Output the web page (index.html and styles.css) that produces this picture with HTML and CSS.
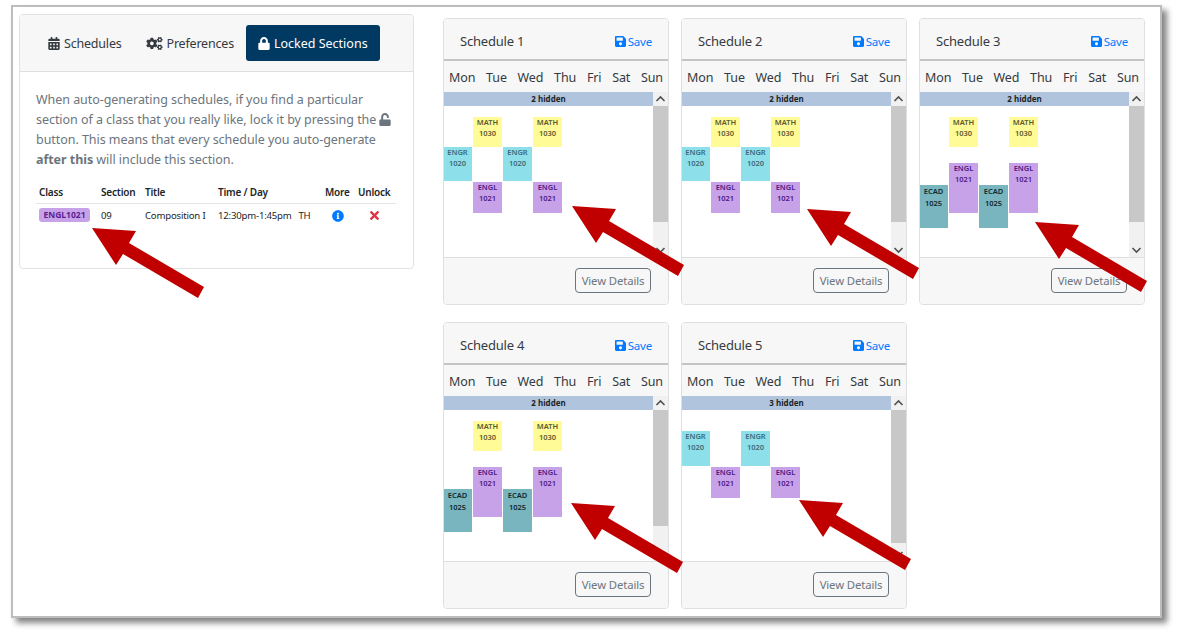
FILE: index.html
```html
<!DOCTYPE html>
<html lang="en">
<head>
<meta charset="utf-8">
<title>Locked Sections</title>
<link rel="stylesheet" href="styles.css">
</head>
<body>
<svg class="defs" aria-hidden="true">
  <symbol id="i-cal" viewBox="0 0 448 512"><path d="M0 464c0 26.5 21.5 48 48 48h352c26.5 0 48-21.5 48-48V192H0v272zm320-196c0-6.6 5.4-12 12-12h40c6.6 0 12 5.4 12 12v40c0 6.6-5.4 12-12 12h-40c-6.6 0-12-5.4-12-12v-40zm0 128c0-6.6 5.4-12 12-12h40c6.6 0 12 5.4 12 12v40c0 6.6-5.4 12-12 12h-40c-6.6 0-12-5.4-12-12v-40zM192 268c0-6.6 5.4-12 12-12h40c6.6 0 12 5.4 12 12v40c0 6.6-5.4 12-12 12h-40c-6.6 0-12-5.4-12-12v-40zm0 128c0-6.6 5.4-12 12-12h40c6.6 0 12 5.4 12 12v40c0 6.6-5.4 12-12 12h-40c-6.6 0-12-5.4-12-12v-40zM64 268c0-6.6 5.4-12 12-12h40c6.6 0 12 5.4 12 12v40c0 6.6-5.4 12-12 12H76c-6.6 0-12-5.4-12-12v-40zm0 128c0-6.6 5.4-12 12-12h40c6.6 0 12 5.4 12 12v40c0 6.6-5.4 12-12 12H76c-6.6 0-12-5.4-12-12v-40zM400 64h-48V16c0-8.8-7.2-16-16-16h-32c-8.8 0-16 7.2-16 16v48H160V16c0-8.8-7.2-16-16-16h-32c-8.8 0-16 7.2-16 16v48H48C21.5 64 0 85.5 0 112v48h448v-48c0-26.5-21.5-48-48-48z"/></symbol>
  <symbol id="i-cogs" viewBox="0 0 640 512"><path d="M512.1 191l-8.2 14.3c-3 5.3-9.4 7.5-15.1 5.4-11.8-4.4-22.6-10.7-32.1-18.6-4.6-3.8-5.8-10.5-2.8-15.7l8.2-14.3c-6.9-8-12.3-17.3-15.9-27.4h-16.5c-6 0-11.2-4.3-12.2-10.3-2-12-2.1-24.6 0-37.1 1-6 6.2-10.4 12.2-10.4h16.5c3.6-10.1 9-19.4 15.9-27.4l-8.2-14.3c-3-5.2-1.9-11.9 2.8-15.7 9.5-7.9 20.4-14.2 32.1-18.6 5.7-2.1 12.1.1 15.1 5.4l8.2 14.3c10.5-1.9 21.2-1.9 31.7 0L552 6.3c3-5.3 9.4-7.5 15.1-5.4 11.8 4.4 22.6 10.7 32.1 18.6 4.6 3.8 5.8 10.5 2.8 15.7l-8.2 14.3c6.9 8 12.3 17.3 15.9 27.4h16.5c6 0 11.2 4.3 12.2 10.3 2 12 2.1 24.6 0 37.1-1 6-6.2 10.4-12.2 10.4h-16.5c-3.6 10.1-9 19.4-15.9 27.4l8.2 14.3c3 5.2 1.9 11.9-2.8 15.7-9.5 7.9-20.4 14.2-32.1 18.6-5.7 2.1-12.1-.1-15.1-5.4l-8.2-14.3c-10.4 1.9-21.2 1.9-31.7 0zm-10.5-58.8c38.5 29.6 82.4-14.3 52.8-52.8-38.5-29.7-82.4 14.3-52.8 52.8zM386.3 286.1l33.7 16.8c10.1 5.8 14.5 18.1 10.5 29.1-8.9 24.2-26.4 46.4-42.6 65.8-7.4 8.9-20.2 11.1-30.3 5.3l-29.1-16.8c-16 13.7-34.6 24.6-54.9 31.7v33.6c0 11.6-8.3 21.6-19.7 23.6-24.6 4.2-50.4 4.4-75.9 0-11.5-2-20-11.9-20-23.6V418c-20.3-7.2-38.9-18-54.9-31.7L74 403c-10 5.8-22.9 3.6-30.3-5.3-16.2-19.4-33.3-41.6-42.2-65.7-4-10.9.4-23.2 10.5-29.1l33.3-16.8c-3.9-20.9-3.9-42.4 0-63.4L12 205.8c-10.1-5.8-14.6-18.1-10.5-29 8.9-24.2 26-46.4 42.2-65.8 7.4-8.9 20.2-11.1 30.3-5.3l29.1 16.8c16-13.7 34.6-24.6 54.9-31.7V57.1c0-11.5 8.2-21.5 19.6-23.5 24.6-4.2 50.5-4.4 76-.1 11.5 2 20 11.9 20 23.6v33.6c20.3 7.2 38.9 18 54.9 31.7l29.1-16.8c10-5.8 22.9-3.6 30.3 5.3 16.2 19.4 33.2 41.6 42.1 65.8 4 10.9.1 23.2-10 29.1l-33.7 16.8c3.9 21 3.9 42.5 0 63.5zm-117.6 21.1c59.2-77-28.7-164.9-105.7-105.7-59.2 77 28.7 164.9 105.7 105.7zm243.4 182.7l-8.2 14.3c-3 5.3-9.4 7.5-15.1 5.4-11.8-4.4-22.6-10.7-32.1-18.6-4.6-3.8-5.8-10.5-2.8-15.7l8.2-14.3c-6.9-8-12.3-17.3-15.9-27.4h-16.5c-6 0-11.2-4.3-12.2-10.3-2-12-2.1-24.6 0-37.1 1-6 6.2-10.4 12.2-10.4h16.5c3.6-10.1 9-19.4 15.9-27.4l-8.2-14.3c-3-5.2-1.9-11.9 2.8-15.7 9.5-7.9 20.4-14.2 32.1-18.6 5.7-2.1 12.1.1 15.1 5.4l8.2 14.3c10.5-1.9 21.2-1.9 31.7 0l8.2-14.3c3-5.3 9.4-7.5 15.1-5.4 11.8 4.4 22.6 10.7 32.1 18.6 4.6 3.8 5.8 10.5 2.8 15.7l-8.2 14.3c6.9 8 12.3 17.3 15.9 27.4h16.5c6 0 11.2 4.3 12.2 10.3 2 12 2.1 24.6 0 37.1-1 6-6.2 10.4-12.2 10.4h-16.5c-3.6 10.1-9 19.4-15.9 27.4l8.2 14.3c3 5.2 1.9 11.9-2.8 15.7-9.5 7.9-20.4 14.2-32.1 18.6-5.7 2.1-12.1-.1-15.1-5.4l-8.2-14.3c-10.4 1.9-21.2 1.9-31.7 0zM501.6 431c38.5 29.6 82.4-14.3 52.8-52.8-38.5-29.6-82.4 14.3-52.8 52.8z"/></symbol>
  <symbol id="i-lock" viewBox="0 0 448 512"><path d="M400 224h-24v-72C376 68.2 307.8 0 224 0S72 68.2 72 152v72H48c-26.5 0-48 21.5-48 48v192c0 26.5 21.5 48 48 48h352c26.5 0 48-21.5 48-48V272c0-26.5-21.5-48-48-48zm-104 0H152v-72c0-39.7 32.3-72 72-72s72 32.3 72 72v72z"/></symbol>
  <symbol id="i-unlock" viewBox="0 0 448 512"><path d="M400 256H152V152.9c0-39.6 31.7-72.5 71.3-72.9 40-.4 72.7 32.1 72.7 72v16c0 13.3 10.7 24 24 24h32c13.3 0 24-10.7 24-24v-16C376 68 307.5-.3 223.5 0 139.5.3 72 69.5 72 153.5V256H48c-26.5 0-48 21.5-48 48v160c0 26.5 21.5 48 48 48h352c26.5 0 48-21.5 48-48V304c0-26.5-21.5-48-48-48z"/></symbol>
  <symbol id="i-save" viewBox="0 0 448 512"><path d="M433.941 129.941l-83.882-83.882A48 48 0 0 0 316.118 32H48C21.49 32 0 53.49 0 80v352c0 26.51 21.49 48 48 48h352c26.51 0 48-21.49 48-48V163.882a48 48 0 0 0-14.059-33.941zM224 416c-35.346 0-64-28.654-64-64 0-35.346 28.654-64 64-64s64 28.654 64 64c0 35.346-28.654 64-64 64zm96-304.52V212c0 6.627-5.373 12-12 12H76c-6.627 0-12-5.373-12-12V108c0-6.627 5.373-12 12-12h228.52c3.183 0 6.235 1.264 8.485 3.515l3.48 3.48A11.996 11.996 0 0 1 320 111.48z"/></symbol>
  <symbol id="i-info" viewBox="0 0 512 512"><path d="M256 8C119.043 8 8 119.083 8 256c0 136.997 111.043 248 248 248s248-111.003 248-248C504 119.083 392.957 8 256 8zm0 110c23.196 0 42 18.804 42 42s-18.804 42-42 42-42-18.804-42-42 18.804-42 42-42zm56 254c0 6.627-5.373 12-12 12h-88c-6.627 0-12-5.373-12-12v-24c0-6.627 5.373-12 12-12h12v-64h-12c-6.627 0-12-5.373-12-12v-24c0-6.627 5.373-12 12-12h64c6.627 0 12 5.373 12 12v100h12c6.627 0 12 5.373 12 12v24z"/></symbol>
  <symbol id="i-times" viewBox="0 0 352 512"><path d="M242.72 256l100.07-100.07c12.28-12.28 12.28-32.19 0-44.48l-22.24-22.24c-12.28-12.28-32.19-12.28-44.48 0L176 189.28 75.93 89.21c-12.28-12.28-32.19-12.28-44.48 0L9.21 111.45c-12.28 12.28-12.28 32.19 0 44.48L109.28 256 9.21 356.07c-12.28 12.28-12.28 32.19 0 44.48l22.24 22.24c12.28 12.28 32.2 12.28 44.48 0L176 322.72l100.07 100.07c12.28 12.28 32.2 12.28 44.48 0l22.24-22.24c12.28-12.28 12.28-32.19 0-44.48L242.72 256z"/></symbol>
  <symbol id="i-up" viewBox="0 0 15 14"><path d="M3.5 9 7.5 5 11.5 9" fill="none" stroke="currentColor" stroke-width="1.6"/></symbol>
  <symbol id="i-down" viewBox="0 0 15 14"><path d="M3.5 5 7.5 9 11.5 5" fill="none" stroke="currentColor" stroke-width="1.6"/></symbol>
  <symbol id="i-arrow" viewBox="0 0 113 71"><polygon points="0,0 44,3 37,15 112,59 106,70 31,26 24,37"/></symbol>
</svg>

<main class="frame">
  <section class="panel">
    <nav class="panel-head">
      <a class="tab"><svg class="ic ic-cal"><use href="#i-cal"/></svg>Schedules</a>
      <a class="tab"><svg class="ic ic-cogs"><use href="#i-cogs"/></svg>Preferences</a>
      <a class="tab active"><svg class="ic ic-cal"><use href="#i-lock"/></svg>Locked Sections</a>
    </nav>
    <div class="panel-body">
      <p class="lead">When auto-generating schedules, if you find a particular section of a class that you really like, lock it by pressing the <svg class="ic-inline"><use href="#i-unlock"/></svg> button. This means that every schedule you auto-generate <b>after this</b> will include this section.</p>
      <table class="locks">
        <colgroup><col class="w-class"><col class="w-sec"><col class="w-title"><col class="w-time"><col class="w-more"><col class="w-unlock"></colgroup>
        <thead><tr><th>Class</th><th>Section</th><th>Title</th><th>Time / Day</th><th>More</th><th>Unlock</th></tr></thead>
        <tbody><tr>
          <td><span class="badge">ENGL1021</span></td><td>09</td><td>Composition I</td><td>12:30pm-1:45pm&nbsp;&nbsp;&nbsp;TH</td>
          <td class="mid"><svg class="ic-info"><use href="#i-info"/></svg></td>
          <td class="mid"><svg class="ic-times"><use href="#i-times"/></svg></td>
        </tr></tbody>
      </table>
    </div>
  </section>

  <section class="cards">
    <article class="card">
      <header class="card-head"><h2>Schedule 1</h2><a class="save"><svg class="ic-save"><use href="#i-save"/></svg>Save</a></header>
      <div class="days"><span>Mon</span><span>Tue</span><span>Wed</span><span>Thu</span><span>Fri</span><span>Sat</span><span>Sun</span></div>
      <div class="cal">
        <div class="view"><div class="hidden-bar">2 hidden</div>
          <div class="ev math c1 mw-a">MATH<br>1030</div><div class="ev math c3 mw-a">MATH<br>1030</div>
          <div class="ev engr c0 er-a">ENGR<br>1020</div><div class="ev engr c2 er-a">ENGR<br>1020</div>
          <div class="ev engl c1 el-a">ENGL<br>1021</div><div class="ev engl c3 el-a">ENGL<br>1021</div>
        </div>
        <div class="sb"><svg class="sb-btn"><use href="#i-up"/></svg><div class="thumb"></div><svg class="sb-btn"><use href="#i-down"/></svg></div>
      </div>
      <footer class="card-foot"><a class="btn">View Details</a></footer>
    </article>
    <article class="card">
      <header class="card-head"><h2>Schedule 2</h2><a class="save"><svg class="ic-save"><use href="#i-save"/></svg>Save</a></header>
      <div class="days"><span>Mon</span><span>Tue</span><span>Wed</span><span>Thu</span><span>Fri</span><span>Sat</span><span>Sun</span></div>
      <div class="cal">
        <div class="view"><div class="hidden-bar">2 hidden</div>
          <div class="ev math c1 mw-a">MATH<br>1030</div><div class="ev math c3 mw-a">MATH<br>1030</div>
          <div class="ev engr c0 er-a">ENGR<br>1020</div><div class="ev engr c2 er-a">ENGR<br>1020</div>
          <div class="ev engl c1 el-a">ENGL<br>1021</div><div class="ev engl c3 el-a">ENGL<br>1021</div>
        </div>
        <div class="sb"><svg class="sb-btn"><use href="#i-up"/></svg><div class="thumb"></div><svg class="sb-btn"><use href="#i-down"/></svg></div>
      </div>
      <footer class="card-foot"><a class="btn">View Details</a></footer>
    </article>
    <article class="card">
      <header class="card-head"><h2>Schedule 3</h2><a class="save"><svg class="ic-save"><use href="#i-save"/></svg>Save</a></header>
      <div class="days"><span>Mon</span><span>Tue</span><span>Wed</span><span>Thu</span><span>Fri</span><span>Sat</span><span>Sun</span></div>
      <div class="cal">
        <div class="view"><div class="hidden-bar">2 hidden</div>
          <div class="ev math c1 mw-a">MATH<br>1030</div><div class="ev math c3 mw-a">MATH<br>1030</div>
          <div class="ev engl c1 el-b">ENGL<br>1021</div><div class="ev engl c3 el-b">ENGL<br>1021</div>
          <div class="ev ecad c0">ECAD<br>1025</div><div class="ev ecad c2">ECAD<br>1025</div>
        </div>
        <div class="sb"><svg class="sb-btn"><use href="#i-up"/></svg><div class="thumb"></div><svg class="sb-btn"><use href="#i-down"/></svg></div>
      </div>
      <footer class="card-foot"><a class="btn">View Details</a></footer>
    </article>
    <article class="card">
      <header class="card-head"><h2>Schedule 4</h2><a class="save"><svg class="ic-save"><use href="#i-save"/></svg>Save</a></header>
      <div class="days"><span>Mon</span><span>Tue</span><span>Wed</span><span>Thu</span><span>Fri</span><span>Sat</span><span>Sun</span></div>
      <div class="cal">
        <div class="view"><div class="hidden-bar">2 hidden</div>
          <div class="ev math c1 mw-a">MATH<br>1030</div><div class="ev math c3 mw-a">MATH<br>1030</div>
          <div class="ev engl c1 el-b">ENGL<br>1021</div><div class="ev engl c3 el-b">ENGL<br>1021</div>
          <div class="ev ecad c0">ECAD<br>1025</div><div class="ev ecad c2">ECAD<br>1025</div>
        </div>
        <div class="sb"><svg class="sb-btn"><use href="#i-up"/></svg><div class="thumb"></div><svg class="sb-btn"><use href="#i-down"/></svg></div>
      </div>
      <footer class="card-foot"><a class="btn">View Details</a></footer>
    </article>
    <article class="card">
      <header class="card-head"><h2>Schedule 5</h2><a class="save"><svg class="ic-save"><use href="#i-save"/></svg>Save</a></header>
      <div class="days"><span>Mon</span><span>Tue</span><span>Wed</span><span>Thu</span><span>Fri</span><span>Sat</span><span>Sun</span></div>
      <div class="cal">
        <div class="view"><div class="hidden-bar">3 hidden</div>
          <div class="ev engr c0 er-b">ENGR<br>1020</div><div class="ev engr c2 er-b">ENGR<br>1020</div>
          <div class="ev engl c1 el-c">ENGL<br>1021</div><div class="ev engl c3 el-c">ENGL<br>1021</div>
        </div>
        <div class="sb"><svg class="sb-btn"><use href="#i-up"/></svg><div class="thumb long"></div><svg class="sb-btn"><use href="#i-down"/></svg></div>
      </div>
      <footer class="card-foot"><a class="btn">View Details</a></footer>
    </article>
  </section>

  <svg class="arrow a1"><use href="#i-arrow"/></svg>
  <svg class="arrow a2"><use href="#i-arrow"/></svg>
  <svg class="arrow a3"><use href="#i-arrow"/></svg>
  <svg class="arrow a4"><use href="#i-arrow"/></svg>
  <svg class="arrow a5"><use href="#i-arrow"/></svg>
  <svg class="arrow a6"><use href="#i-arrow"/></svg>
</main>
</body>
</html>
```
FILE: styles.css
```css
* { box-sizing: border-box; }
html, body { margin: 0; padding: 0; background: #fff; }
body { width: 1188px; height: 638px; overflow: hidden; font-family: "Noto Sans", "Open Sans", sans-serif; color: #212529; }
.defs { position: absolute; width: 0; height: 0; }

.frame {
  position: relative;
  display: flex;
  align-items: flex-start;
  width: 1151px;
  height: 613px;
  margin: 5px 0 0 11px;
  padding: 7px 0 0 6px;
  border: 2px solid #bdbdbd;
  box-shadow: 5px 5px 6px #858585;
  background: #fff;
}

.panel {
  flex: none;
  width: 395px;
  height: 255px;
  border: 1px solid #e2e2e2;
  border-radius: 4px;
  overflow: hidden;
}
.panel-head {
  display: flex;
  height: 57px;
  padding: 10px 0 0 16px;
  background: #f7f7f7;
  border-bottom: 1px solid #dfdfdf;
}
.tab {
  display: flex;
  align-items: center;
  height: 36px;
  padding: 0 12px;
  font-size: 12.5px;
  letter-spacing: -0.2px;
  color: #343a40;
  border-radius: 3px;
  white-space: nowrap;
}
.tab.active { background: #003a63; color: #fff; letter-spacing: 0; }
.ic { fill: currentColor; height: 13px; margin-right: 4px; flex: none; }
.ic-cal { width: 12px; }
.ic-cogs { width: 17px; }

.panel-body { padding: 18px 16px 0; }
.lead {
  margin: 0;
  font-size: 12.5px;
  letter-spacing: -0.05px;
  line-height: 19.85px;
  color: #6c757d;
}
.lead b { font-weight: 700; }
.ic-inline { width: 12px; height: 13px; fill: #6c757d; vertical-align: -2px; }

.locks {
  table-layout: fixed;
  width: 360px;
  margin-top: 11px;
  border-collapse: collapse;
  font-size: 10px;
  letter-spacing: -0.2px;
  color: #212529;
}
.w-class { width: 62px; }
.w-sec { width: 44px; }
.w-title { width: 73px; }
.w-time { width: 107px; }
.w-more { width: 33px; }
.w-unlock { width: 41px; }
.locks th { height: 23px; padding: 0 0 0 3px; text-align: left; font-weight: 600; border-bottom: 1px solid #e3e6e9; white-space: nowrap; }
.locks td { height: 23px; padding: 0 0 0 3px; font-size: 9.6px; white-space: nowrap; }
.locks td.mid { text-align: center; padding: 0 2px 0 0; }
.badge {
  display: inline-block;
  width: 51px;
  height: 14px;
  line-height: 14px;
  text-align: center;
  font-size: 8.5px;
  letter-spacing: 0;
  font-weight: 700;
  color: #5b1f94;
  background: #c8a2e8;
  border-radius: 3px;
}
.ic-info { width: 12px; height: 12px; fill: #007bff; vertical-align: middle; }
.ic-times { width: 9px; height: 13px; fill: #dc3545; vertical-align: middle; }

.cards {
  flex: none;
  display: grid;
  grid-template-columns: repeat(3, 226px);
  grid-auto-rows: 287px;
  column-gap: 12px;
  row-gap: 17px;
  margin: 4px 0 0 29px;
}
.card {
  display: flex;
  flex-direction: column;
  border: 1px solid #dfdfdf;
  border-radius: 4px;
  overflow: hidden;
  background: #fff;
}
.card-head {
  flex: none;
  display: flex;
  align-items: center;
  justify-content: space-between;
  height: 42px;
  padding: 0 16px;
  background: #f7f7f7;
  border-bottom: 2px solid #c4c4c4;
}
.card-head h2 { margin: 4px 0 0; font-size: 13px; letter-spacing: -0.2px; font-weight: 400; color: #343a40; }
.save { display: flex; align-items: center; font-size: 11.5px; letter-spacing: -0.2px; color: #007bff; margin-top: 4px; }
.ic-save { width: 11px; height: 13px; fill: #007bff; margin-right: 2px; }

.days {
  flex: none;
  display: flex;
  justify-content: space-between;
  align-items: center;
  height: 31px;
  padding: 2px 5px 0 5px;
  font-size: 12.5px;
  letter-spacing: -0.1px;
  background: #f7f7f7;
  color: #343a40;
}

.cal { flex: 1; display: flex; min-height: 0; }
.view { position: relative; flex: 1; overflow: hidden; }
.hidden-bar {
  height: 14px;
  line-height: 14px;
  text-align: center;
  font-size: 8px;
  font-weight: 700;
  background: #b0c4de;
  color: #212529;
}
.ev {
  position: absolute;
  width: 30px;
  text-align: center;
  font-size: 7.5px;
  font-weight: 600;
  line-height: 11px;
  border: 1px solid #fff;
  border-width: 0 1px 1px 0;
}
.c0 { left: -1px; }
.c1 { left: 29px; }
.c2 { left: 59px; }
.c3 { left: 89px; }
.math { background: #fffb96; color: #5c5c33; }
.engr { background: #8ddfe9; color: #3d6b78; }
.engl { background: #c8a2e8; color: #4d1a85; }
.ecad { background: #78b5be; color: #0d2a33; top: 93px; height: 44px; line-height: 12px; }
.mw-a { top: 25px; height: 31px; }
.er-a { top: 55px; height: 35px; }
.el-a { top: 90px; height: 32px; }
.el-b { top: 71px; height: 51px; }
.er-b { top: 35px; height: 36px; }
.el-c { top: 71px; height: 32px; }

.sb { flex: none; display: flex; flex-direction: column; width: 15px; background: #f1f1f1; color: #505050; }
.sb-btn { flex: none; width: 15px; height: 14px; }
.thumb { flex: none; height: 116px; background: #c8c8c8; }
.thumb.long { height: 133px; }
.sb .sb-btn:last-child { margin-top: auto; }

.card-foot {
  flex: none;
  display: flex;
  justify-content: flex-end;
  align-items: flex-start;
  height: 47px;
  padding: 10px 17px 0 0;
  background: #f7f7f7;
  border-top: 1px solid #dfdfdf;
}
.btn {
  display: flex;
  align-items: center;
  justify-content: center;
  width: 76px;
  height: 25px;
  font-size: 11.3px;
  letter-spacing: -0.1px;
  color: #6c757d;
  border: 1px solid #6c757d;
  border-radius: 4px;
}

.arrow { position: absolute; width: 113px; height: 71px; fill: #c00000; }
.a1 { left: 79px; top: 221px; }
.a2 { left: 559px; top: 199px; }
.a3 { left: 794px; top: 202px; }
.a4 { left: 1022px; top: 215px; }
.a5 { left: 558px; top: 496px; }
.a6 { left: 786px; top: 493px; }
```
